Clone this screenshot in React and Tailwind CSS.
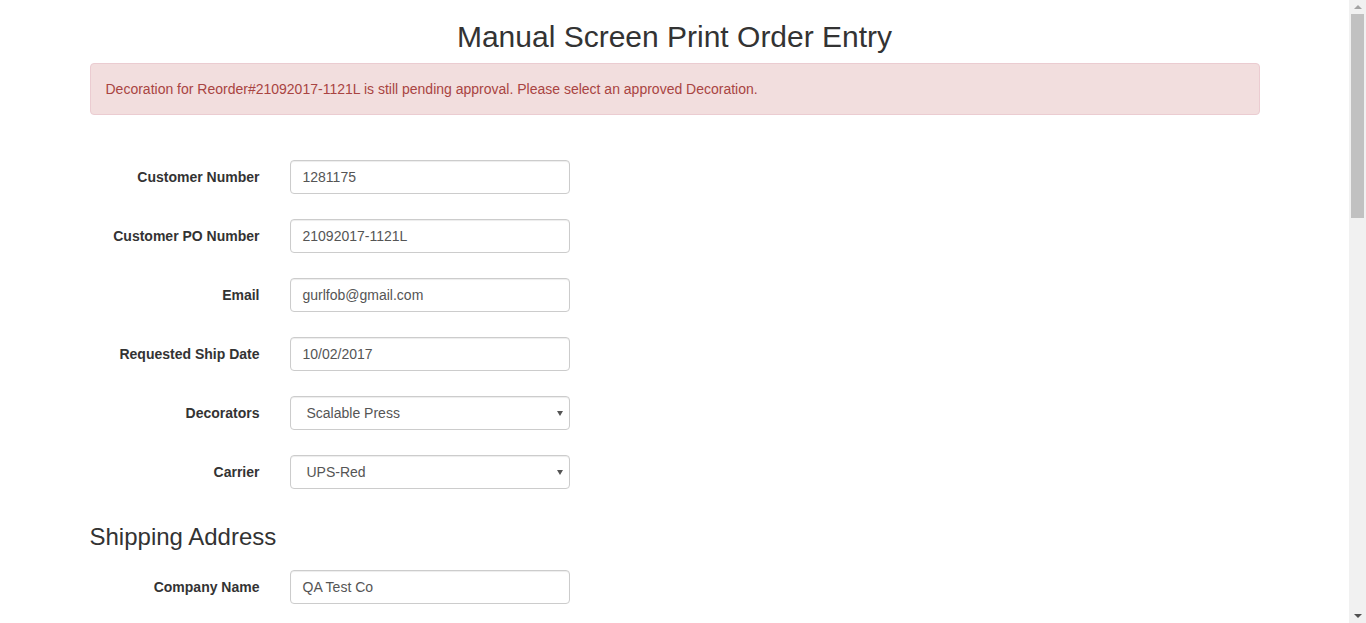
import React from 'react';

const fields = [
  { label: 'Customer Number', value: '1281175' },
  { label: 'Customer PO Number', value: '21092017-1121L' },
  { label: 'Email', value: 'gurlfob@gmail.com' },
  { label: 'Requested Ship Date', value: '10/02/2017' },
  { label: 'Decorators', value: 'Scalable Press', select: true },
  { label: 'Carrier', value: 'UPS-Red', select: true },
];

const Row = ({ label, value, select }) => (
  <div className="flex items-center h-[34px]">
    <label className="w-[170px] text-right text-[14px] font-bold text-[#333]">{label}</label>
    <div className="ml-[30px] w-[280px] h-[34px] flex items-center justify-between rounded-[4px] border border-[#ccc] bg-white px-3 shadow-[inset_0_1px_1px_rgba(0,0,0,0.075)]">
      <span className={select ? 'pl-[4px] text-[14px] text-[#555]' : 'text-[14px] text-[#555]'}>{value}</span>
      {select && (
        <span className="-mr-[6px] w-0 h-0 border-l-[3.5px] border-r-[3.5px] border-t-[5px] border-l-transparent border-r-transparent border-t-[#555]" />
      )}
    </div>
  </div>
);

const Scrollbar = () => (
  <div className="w-[17px] h-full bg-[#f1f1f1] flex flex-col items-center">
    <div className="h-[14px] flex items-center justify-center">
      <div className="w-0 h-0 border-l-[4px] border-r-[4px] border-b-[4px] border-l-transparent border-r-transparent border-b-[#a3a3a3]" />
    </div>
    <div className="w-[13px] h-[204px] bg-[#c1c1c1]" />
    <div className="flex-1" />
    <div className="h-[14px] flex items-center justify-center">
      <div className="w-0 h-0 border-l-[4px] border-r-[4px] border-t-[4px] border-l-transparent border-r-transparent border-t-[#505050]" />
    </div>
  </div>
);

export default function App() {
  return (
    <div className="flex h-[623px] w-[1366px] overflow-hidden bg-white font-['Liberation_Sans',Arial,sans-serif] text-[#333]">
      <div className="flex-1 overflow-hidden">
        <div className="w-[1170px] mx-auto">
          <h2 className="mt-[20px] mb-[10px] text-center text-[30px] leading-[33px] font-normal">Manual Screen Print Order Entry</h2>
          <div className="rounded-[4px] border border-[#ebccd1] bg-[#f2dede] px-[15px] py-[15px] text-[14px] leading-[20px] text-[#a94442]">
            Decoration for Reorder#21092017-1121L is still pending approval. Please select an approved Decoration.
          </div>
          <div className="mt-[45px] flex flex-col gap-[25px]">
            {fields.map((f) => (
              <Row key={f.label} {...f} />
            ))}
          </div>
          <h3 className="mt-[34px] mb-[19px] text-[24px] leading-[28px] font-normal">Shipping Address</h3>
          <Row label="Company Name" value="QA Test Co" />
        </div>
      </div>
      <Scrollbar />
    </div>
  );
}
